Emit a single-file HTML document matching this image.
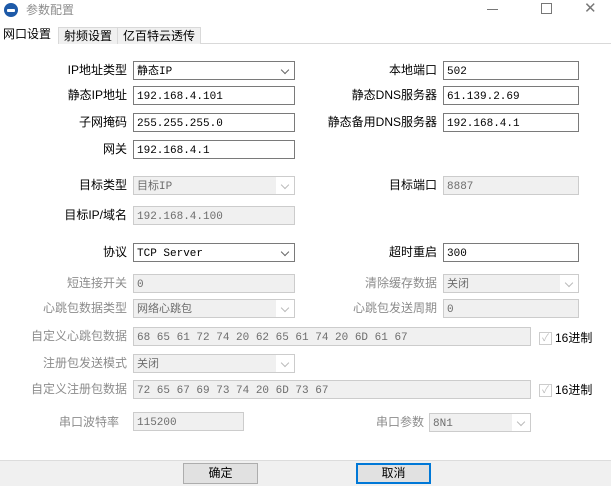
<!DOCTYPE html>
<html><head><meta charset="utf-8"><style>
body{margin:0;width:611px;height:485px;background:#fff;position:relative;overflow:hidden;font-family:"Liberation Sans","Noto Sans CJK SC",sans-serif;font-size:12px;color:#000}
.a{position:absolute;white-space:nowrap}
.l{position:absolute;text-align:right;line-height:18px}
.g{color:#8c8c8c}
.i{position:absolute;box-sizing:border-box;border:1px solid #7a7a7a;background:#fff;height:19px;line-height:18px;padding-left:3px;padding-top:1px;font-family:"Liberation Mono","Noto Sans CJK SC",monospace;font-size:11px}
.d{border-color:#ccc;background:#f0f0f0;color:#6d6d6d}
.s::after{content:"";position:absolute;right:6px;top:5px;width:5px;height:5px;border-right:1px solid #666;border-bottom:1px solid #666;transform:rotate(45deg)}
.s.d{background:linear-gradient(to right,#f0f0f0 calc(100% - 18px),#fff calc(100% - 18px))}
.s.d::after{border-color:#bbb}
.cb{position:absolute;width:11px;height:11px;border:1px solid #ccc;background:#fff;font-size:10px;color:#bbb;line-height:11px;text-align:center}
.btn{position:absolute;box-sizing:border-box;height:21px;border:1px solid #adadad;background:#e1e1e1;text-align:center;line-height:19px}
</style></head><body>
<div class="a" style="left:4px;top:3px;width:14px;height:14px;border-radius:50%;background:#1e5aa8"></div>
<div class="a" style="left:7px;top:9px;width:8px;height:3px;background:#fff;border-radius:1px"></div>
<div class="a" style="left:26px;top:1px;color:#8c8c8c;line-height:18px">参数配置</div>
<div class="a" style="left:487px;top:9px;width:11px;height:1px;background:#777"></div>
<div class="a" style="left:541px;top:3px;width:9px;height:9px;border:1px solid #777"></div>
<div class="a" style="left:584px;top:-1px;color:#777;font-size:15px;font-weight:300">✕</div>
<div class="a" style="left:0;top:43px;width:611px;height:1px;background:#d9d9d9"></div>
<div class="a" style="left:0;top:25px;width:58px;height:19px;background:#fff;line-height:18px;padding-left:3px">网口设置</div>
<div class="a" style="left:58px;top:27px;width:58px;height:16px;border:1px solid #d9d9d9;border-bottom:none;background:#f0f0f0;line-height:16px;text-align:center">射频设置</div>
<div class="a" style="left:117px;top:27px;width:82px;height:16px;border:1px solid #d9d9d9;border-bottom:none;background:#f0f0f0;line-height:16px;text-align:center">亿百特云透传</div>

<div class="l" style="right:484px;top:61px">IP地址类型</div><div class="i s" style="left:133px;top:61px;width:162px">静态IP</div>
<div class="l" style="right:174px;top:61px">本地端口</div><div class="i" style="left:443px;top:61px;width:136px">502</div>
<div class="l" style="right:484px;top:86px">静态IP地址</div><div class="i" style="left:133px;top:86px;width:162px">192.168.4.101</div>
<div class="l" style="right:174px;top:86px">静态DNS服务器</div><div class="i" style="left:443px;top:86px;width:136px">61.139.2.69</div>
<div class="l" style="right:484px;top:113px">子网掩码</div><div class="i" style="left:133px;top:113px;width:162px">255.255.255.0</div>
<div class="l" style="right:174px;top:113px">静态备用DNS服务器</div><div class="i" style="left:443px;top:113px;width:136px">192.168.4.1</div>
<div class="l" style="right:484px;top:140px">网关</div><div class="i" style="left:133px;top:140px;width:162px">192.168.4.1</div>

<div class="l" style="right:484px;top:176px">目标类型</div><div class="i s d" style="left:133px;top:176px;width:162px">目标IP</div>
<div class="l" style="right:174px;top:176px">目标端口</div><div class="i d" style="left:443px;top:176px;width:136px">8887</div>
<div class="l" style="right:484px;top:206px">目标IP/域名</div><div class="i d" style="left:133px;top:206px;width:162px">192.168.4.100</div>

<div class="l" style="right:484px;top:243px">协议</div><div class="i s" style="left:133px;top:243px;width:162px">TCP Server</div>
<div class="l" style="right:174px;top:243px">超时重启</div><div class="i" style="left:443px;top:243px;width:136px">300</div>

<div class="l g" style="right:484px;top:274px">短连接开关</div><div class="i d" style="left:133px;top:274px;width:162px">0</div>
<div class="l g" style="right:174px;top:274px">清除缓存数据</div><div class="i s d" style="left:443px;top:274px;width:136px">关闭</div>
<div class="l g" style="right:484px;top:299px">心跳包数据类型</div><div class="i s d" style="left:133px;top:299px;width:162px">网络心跳包</div>
<div class="l g" style="right:174px;top:299px">心跳包发送周期</div><div class="i d" style="left:443px;top:299px;width:136px">0</div>
<div class="l g" style="right:484px;top:327px">自定义心跳包数据</div><div class="i d" style="left:133px;top:327px;width:398px">68 65 61 72 74 20 62 65 61 74 20 6D 61 67</div>
<div class="cb" style="left:539px;top:332px">✓</div><div class="a" style="left:555px;top:329px">16进制</div>
<div class="l g" style="right:484px;top:354px">注册包发送模式</div><div class="i s d" style="left:133px;top:354px;width:162px">关闭</div>
<div class="l g" style="right:484px;top:380px">自定义注册包数据</div><div class="i d" style="left:133px;top:380px;width:398px">72 65 67 69 73 74 20 6D 73 67</div>
<div class="cb" style="left:539px;top:384px">✓</div><div class="a" style="left:555px;top:381px">16进制</div>
<div class="l g" style="right:492px;top:413px">串口波特率</div><div class="i d" style="left:133px;top:412px;width:111px">115200</div>
<div class="l g" style="right:187px;top:413px">串口参数</div><div class="i s d" style="left:429px;top:413px;width:102px">8N1</div>

<div class="a" style="left:0;top:460px;width:611px;height:25px;background:#f0f0f0;border-top:1px solid #dcdcdc"></div>
<div class="btn" style="left:183px;top:463px;width:75px">确定</div>
<div class="btn" style="left:356px;top:463px;width:75px;border:2px solid #0078d7;line-height:17px">取消</div>
</body></html>
